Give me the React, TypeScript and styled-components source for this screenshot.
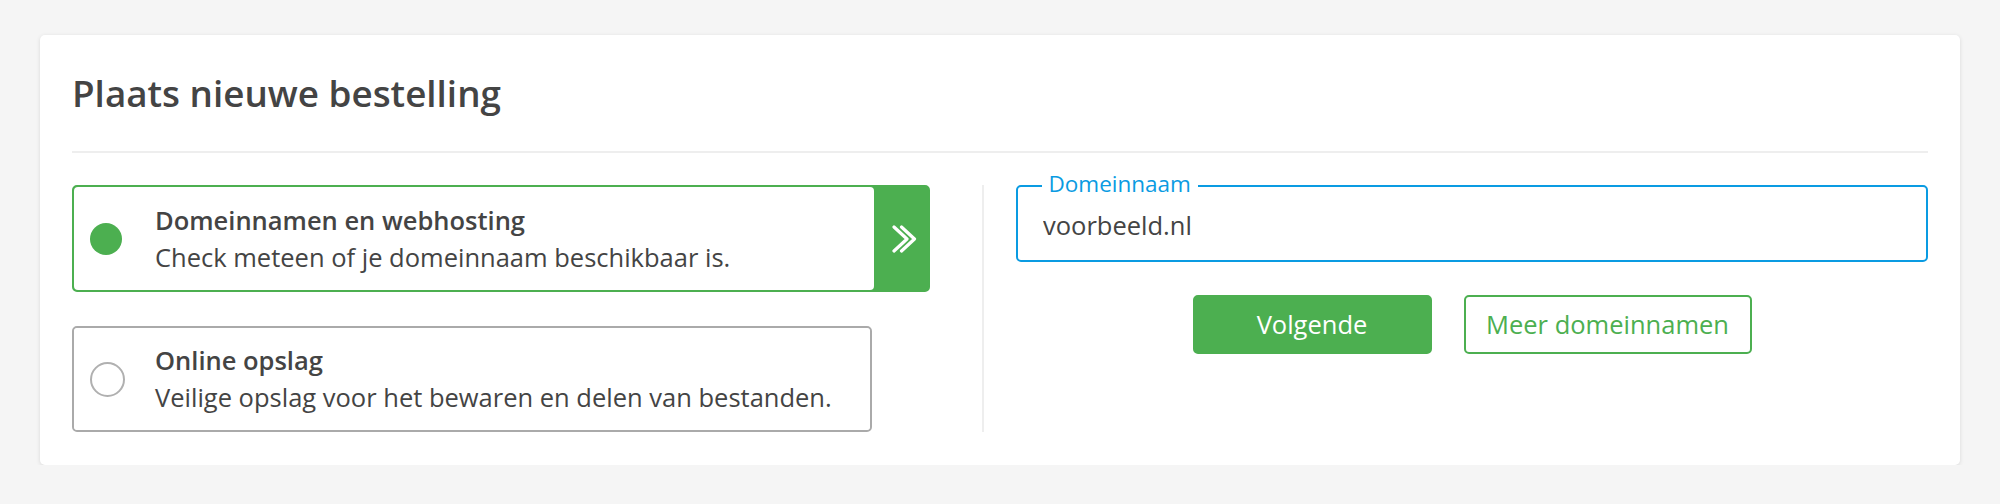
import React from "react";
import styled, { createGlobalStyle } from "styled-components";

const GREEN = "#4caf50";
const BLUE = "#0a9be2";
const TEXT = "#444444";

const GlobalStyle = createGlobalStyle`
  html, body {
    margin: 0;
    padding: 0;
    background: #f5f5f5;
    min-height: 100%;
  }
  body {
    font-family: "Open Sans", "Noto Sans", "Liberation Sans", sans-serif;
    color: ${TEXT};
  }
  * { box-sizing: border-box; }
`;

const Page = styled.div`
  padding: 35px 40px 0;
`;

const Card = styled.section`
  background: #ffffff;
  border-radius: 5px;
  box-shadow: 0 1px 4px rgba(0, 0, 0, 0.12);
  padding: 32px 32px 33px;
`;

const Title = styled.h1`
  margin: 0;
  font-size: 36.8px;
  line-height: 52px;
  font-weight: 600;
  color: ${TEXT};
  padding-bottom: 32px;
  border-bottom: 2px solid #eeeeee;
`;

const Content = styled.div`
  display: flex;
  margin-top: 32px;
`;

const LeftColumn = styled.div`
  flex: 0 0 912px;
  display: flex;
  flex-direction: column;
  gap: 34px;
  padding-right: 52px;
  border-right: 2px solid #eeeeee;
`;

const OptionBox = styled.div<{ $selected?: boolean }>`
  display: flex;
  width: ${(p) => (p.$selected ? "858px" : "800px")};
  height: ${(p) => (p.$selected ? "107px" : "106px")};
  border: 2px solid ${(p) => (p.$selected ? GREEN : "#aaaaaa")};
  border-radius: 5px;
  background: ${(p) => (p.$selected ? GREEN : "#ffffff")};
  cursor: pointer;
`;

const OptionBody = styled.div<{ $selected?: boolean }>`
  flex: ${(p) => (p.$selected ? "0 0 800px" : "1 1 auto")};
  display: flex;
  align-items: center;
  background: #ffffff;
  border-radius: 4px;
  padding-left: 16px;
`;

const RadioSlot = styled.div`
  flex: 0 0 65px;
  display: flex;
  align-items: center;
`;

const Radio = styled.span<{ $checked?: boolean }>`
  display: block;
  width: ${(p) => (p.$checked ? "32px" : "35px")};
  height: ${(p) => (p.$checked ? "32px" : "35px")};
  border-radius: 50%;
  background: ${(p) => (p.$checked ? GREEN : "#ffffff")};
  border: ${(p) => (p.$checked ? "none" : "2px solid #b0b0b0")};
`;

const OptionText = styled.div`
  display: flex;
  flex-direction: column;
  font-size: 25.5px;
  line-height: 36.7px;
  color: ${TEXT};
`;

const OptionTitle = styled.span`
  font-weight: 600;
`;

const OptionDesc = styled.span`
  font-weight: 400;
`;

const ArrowTab = styled.div`
  flex: 1 1 auto;
  display: flex;
  align-items: center;
  justify-content: center;
  padding-left: 8px;
`;

const RightColumn = styled.div`
  flex: 1 1 auto;
  padding-left: 32px;
  display: flex;
  flex-direction: column;
`;

const Field = styled.div`
  position: relative;
  height: 77px;
  border: 2px solid ${BLUE};
  border-radius: 5px;
`;

const FieldLabel = styled.label`
  position: absolute;
  top: -16.4px;
  left: 24px;
  padding: 0 7px 0 6.5px;
  background: #ffffff;
  color: ${BLUE};
  font-size: 22.5px;
  line-height: 26px;
  font-weight: 400;
`;

const FieldInput = styled.input`
  display: block;
  width: 100%;
  height: 100%;
  border: none;
  outline: none;
  background: transparent;
  padding: 3px 24px 0 25px;
  font-family: "Open Sans", "Noto Sans", "Liberation Sans", sans-serif;
  font-size: 25.5px;
  color: ${TEXT};
`;

const ButtonRow = styled.div`
  display: flex;
  justify-content: center;
  gap: 32px;
  margin-top: 33px;
`;

const Button = styled.button<{ $variant: "primary" | "outline"; $width: number }>`
  width: ${(p) => p.$width}px;
  height: 59px;
  border-radius: 5px;
  border: 2px solid ${GREEN};
  background: ${(p) => (p.$variant === "primary" ? GREEN : "#ffffff")};
  color: ${(p) => (p.$variant === "primary" ? "#ffffff" : GREEN)};
  font-family: "Open Sans", "Noto Sans", "Liberation Sans", sans-serif;
  font-size: 25.5px;
  font-weight: 400;
  line-height: 1;
  padding: 0;
  cursor: pointer;
`;

const DoubleChevron = () => (
  <svg width="26" height="28" viewBox="0 0 26 28" fill="none" aria-hidden="true">
    <path
      d="M2 2 L15 14 L2 26"
      stroke="#ffffff"
      strokeWidth="3.2"
      strokeLinecap="round"
      strokeLinejoin="round"
    />
    <path
      d="M9.5 2 L22.5 14 L9.5 26"
      stroke="#ffffff"
      strokeWidth="3.2"
      strokeLinecap="round"
      strokeLinejoin="round"
    />
  </svg>
);

type Option = { title: string; desc: string; selected: boolean };

const options: Option[] = [
  {
    title: "Domeinnamen en webhosting",
    desc: "Check meteen of je domeinnaam beschikbaar is.",
    selected: true,
  },
  {
    title: "Online opslag",
    desc: "Veilige opslag voor het bewaren en delen van bestanden.",
    selected: false,
  },
];

export default function App() {
  const [domain, setDomain] = React.useState("voorbeeld.nl");
  return (
    <>
      <GlobalStyle />
      <Page>
        <Card>
          <Title>Plaats nieuwe bestelling</Title>
          <Content>
            <LeftColumn>
              {options.map((o) => (
                <OptionBox key={o.title} $selected={o.selected}>
                  <OptionBody $selected={o.selected}>
                    <RadioSlot>
                      <Radio $checked={o.selected} />
                    </RadioSlot>
                    <OptionText>
                      <OptionTitle>{o.title}</OptionTitle>
                      <OptionDesc>{o.desc}</OptionDesc>
                    </OptionText>
                  </OptionBody>
                  {o.selected && (
                    <ArrowTab>
                      <DoubleChevron />
                    </ArrowTab>
                  )}
                </OptionBox>
              ))}
            </LeftColumn>
            <RightColumn>
              <Field>
                <FieldLabel htmlFor="domain">Domeinnaam</FieldLabel>
                <FieldInput
                  id="domain"
                  value={domain}
                  onChange={(e) => setDomain(e.target.value)}
                />
              </Field>
              <ButtonRow>
                <Button $variant="primary" $width={239}>
                  Volgende
                </Button>
                <Button $variant="outline" $width={288}>
                  Meer domeinnamen
                </Button>
              </ButtonRow>
            </RightColumn>
          </Content>
        </Card>
      </Page>
    </>
  );
}
